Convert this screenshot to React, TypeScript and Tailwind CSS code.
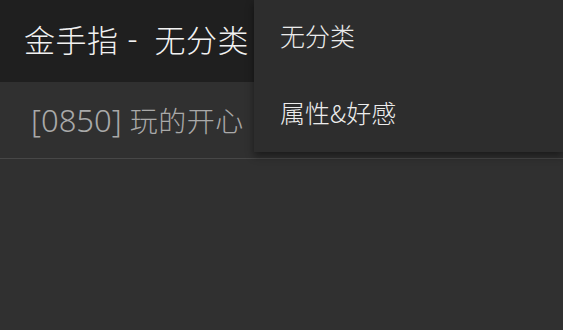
import React from "react";

const cjk = { fontFamily: '"Noto Sans CJK SC", "Noto Sans", sans-serif' };
const latin = { fontFamily: '"Noto Sans", "Noto Sans CJK SC", sans-serif' };

const App: React.FC = () => {
  return (
    <div className="relative h-[330px] w-[563px] overflow-hidden bg-[#303030]" style={cjk}>
      <div className="flex h-[82px] items-center bg-[#1f1f1f] pb-[6px] pl-[24px]">
        <h1 className="flex items-center text-[31px] font-light leading-none text-[#f2f2f2]">
          <span className="tracking-[0.5px]">金手指</span>
          <span className="ml-[9px] mr-[17px]" style={latin}>-</span>
          <span className="tracking-[0.5px]">无分类</span>
        </h1>
      </div>
      <div className="flex h-[77px] items-center border-b border-[#474747] pl-[31px]">
        <p className="flex items-center whitespace-nowrap leading-normal text-[#a9a9a9]">
          <span className="text-[31px] font-light" style={latin}>[0850]</span>
          <span className="ml-[8px] text-[28px] font-light tracking-[0.5px]">玩的开心</span>
        </p>
      </div>

      <div className="absolute right-0 top-0 flex h-[152px] w-[309px] flex-col bg-[#2d2d2d] shadow-[0_4px_8px_rgba(0,0,0,0.45)]">
        <div className="flex h-[76px] items-center pb-[5px] pl-[26px] text-[25px] font-light leading-none text-[#ececec]">
          无分类
        </div>
        <div className="flex h-[76px] items-center pb-[3px] pl-[26px] text-[25px] font-light leading-none text-[#ececec]">
          属性&amp;好感
        </div>
      </div>
    </div>
  );
};

export default App;
